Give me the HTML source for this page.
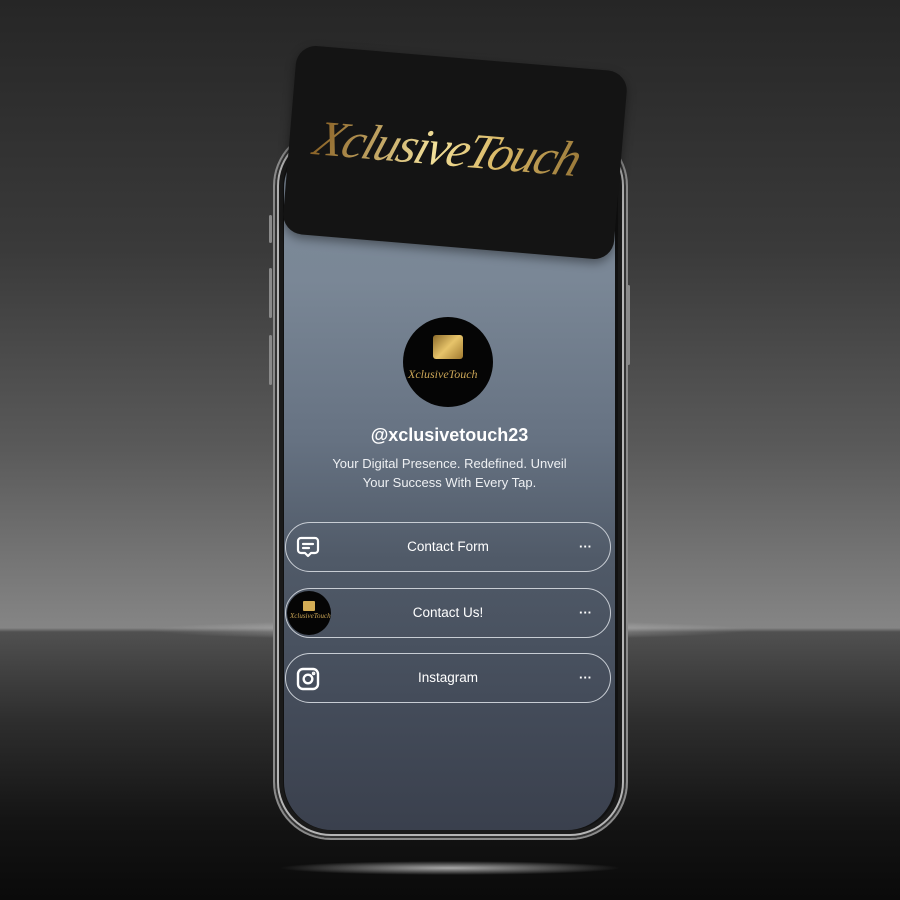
<!DOCTYPE html>
<html><head><meta charset="utf-8"><style>
*{margin:0;padding:0;box-sizing:border-box}
body{width:900px;height:900px;overflow:hidden;position:relative;font-family:"Liberation Sans",sans-serif;
background:linear-gradient(to bottom,#262626 0px,#3a3a3a 250px,#5a5a5a 450px,#7c7c7c 590px,#858585 628px,#505050 632px,#2e2e2e 720px,#141414 820px,#0a0a0a 900px);}
.horiz{position:absolute;left:0;top:612px;width:900px;height:30px;background:radial-gradient(ellipse 300px 10px at 450px 18px,rgba(210,210,210,.7),rgba(200,200,200,0));}
.glow{position:absolute;left:280px;top:858px;width:340px;height:20px;background:radial-gradient(ellipse 170px 7px at 170px 10px,rgba(220,220,220,.75),rgba(0,0,0,0));}
.frame{position:absolute;left:273px;top:128px;width:355px;height:712px;border-radius:58px;background:#111;
border:2px solid #8a8a8a;box-shadow:inset 0 0 0 2px #333,inset 0 0 0 4px #b5b5b5,inset 0 0 0 8px #1a1a1a}
.screen{position:absolute;left:284px;top:140px;width:331px;height:690px;border-radius:48px;overflow:hidden;
background:linear-gradient(to bottom,#7d8a99 0px,#7a8796 140px,#667282 300px,#505a68 420px,#444c5a 560px,#3a404d 690px)}
.side{position:absolute;background:#8a8a8a;width:3px;border-radius:2px}
.card{position:absolute;left:289px;top:58px;width:332px;height:189px;border-radius:20px;background:#141414;
transform:rotate(4.8deg);box-shadow:0 4px 10px rgba(0,0,0,.4)}
.card span{position:absolute;left:26px;top:62px;font-family:"Liberation Serif",serif;font-style:italic;font-size:50px;letter-spacing:-2px;
background:linear-gradient(90deg,#8a6226,#f2e09a 45%,#d9b866 70%,#9b7a3a);-webkit-background-clip:text;color:transparent;transform:skewX(-14deg)}
.av{position:absolute;left:403px;top:317px;width:90px;height:90px;border-radius:50%;background:#050505}
.chip{position:absolute;left:30px;top:18px;width:30px;height:24px;border-radius:3px;background:linear-gradient(135deg,#8b6a2a,#e7c46a,#a07a30)}
.av i{position:absolute;left:5px;top:50px;font-family:"Liberation Serif",serif;font-style:italic;font-size:12px;color:#c9a456;white-space:nowrap}
.user{position:absolute;left:284px;width:331px;top:425px;text-align:center;color:#fff;font-weight:bold;font-size:18px}
.sub{position:absolute;left:284px;width:331px;top:454px;text-align:center;color:#eef0f3;font-size:13px;line-height:19px}
.btn{position:absolute;left:285px;width:326px;height:50px;border:1px solid #c8cdd4;border-radius:25px;color:#fff;font-size:13.5px;text-align:center;line-height:48px}
.dots{position:absolute;right:18px;top:0;font-size:13px;letter-spacing:0;font-weight:bold}
.ic{position:absolute;left:10px;top:13px}
</style></head><body>
<div class="horiz"></div><div class="glow"></div>
<div class="side" style="left:269px;top:215px;height:28px"></div>
<div class="side" style="left:269px;top:268px;height:50px"></div>
<div class="side" style="left:269px;top:335px;height:50px"></div>
<div class="side" style="left:627px;top:285px;height:80px"></div>
<div class="frame"></div>
<div class="screen"></div>
<div class="card"><span>XclusiveTouch</span></div>
<div class="av"><div class="chip"></div><i>XclusiveTouch</i></div>
<div class="user">@xclusivetouch23</div>
<div class="sub">Your Digital Presence. Redefined. Unveil<br>Your Success With Every Tap.</div>
<div class="btn" style="top:522px"><svg class="ic" width="24" height="24" viewBox="0 0 24 24" fill="none" stroke="#fff" stroke-width="2.2" stroke-linejoin="round" stroke-linecap="round"><path d="M5 2h14a3 3 0 0 1 3 3v9a3 3 0 0 1-3 3h-4l-3 3-3-3H5a3 3 0 0 1-3-3V5a3 3 0 0 1 3-3z"/><path d="M7 8h10M7 12h6"/></svg>Contact Form<span class="dots">···</span></div>
<div class="btn" style="top:588px"><div style="position:absolute;left:1px;top:2px;width:44px;height:44px;border-radius:50%;background:#050505"><div style="position:absolute;left:16px;top:10px;width:12px;height:10px;background:#d4ad55;border-radius:1px"></div><i style="position:absolute;left:3px;top:20px;font-family:'Liberation Serif',serif;font-size:7px;color:#c9a456;line-height:10px">XclusiveTouch</i></div>Contact Us!<span class="dots">···</span></div>
<div class="btn" style="top:653px"><svg class="ic" width="24" height="24" viewBox="0 0 24 24" fill="none" stroke="#fff" stroke-width="2.4"><rect x="2" y="2" width="20" height="20" rx="5"/><circle cx="12" cy="12" r="4.3"/><circle cx="17.6" cy="6.4" r=".6" fill="#fff"/></svg>Instagram<span class="dots">···</span></div>
</body></html>
